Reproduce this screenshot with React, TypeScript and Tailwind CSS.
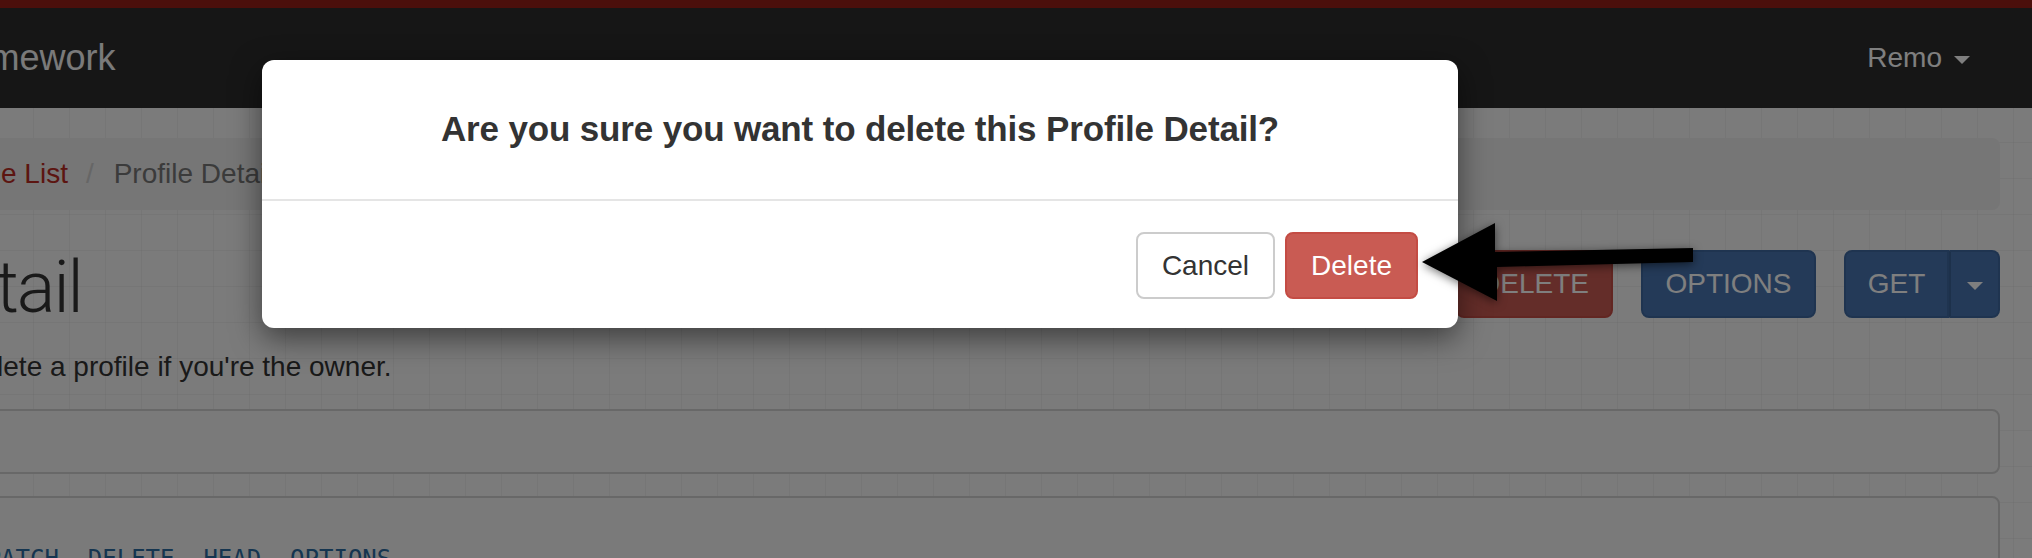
import React from "react";

function Caret({ className = "" }: { className?: string }) {
  return (
    <span
      className={`inline-block h-0 w-0 border-x-[8px] border-t-[8px] border-x-transparent border-t-white ${className}`}
    />
  );
}

export default function App() {
  return (
    <div className="relative h-[558px] w-[2032px] overflow-hidden bg-[#f6f6f6] bg-[linear-gradient(to_right,rgba(0,0,0,0.035)_1px,transparent_1px),linear-gradient(to_bottom,rgba(0,0,0,0.035)_1px,transparent_1px)] bg-[size:36px_36px] bg-[position:33px_34px] font-['Liberation_Sans',Arial,sans-serif] text-[#333]">
      {/* Navbar */}
      <header className="border-t-[8px] border-t-[#961e16] bg-[#2c2c2c]">
        <div className="flex h-[100px] items-center justify-between pr-[62px]">
          <a className="-ml-[282px] whitespace-nowrap text-[36px] text-[#f5f5f5]">Django REST framework</a>
          <div className="flex items-center text-[28px] text-white">
            Remo
            <Caret className="ml-[12px] mt-[4px]" />
          </div>
        </div>
      </header>

      {/* Page content */}
      <main className="-ml-[280px] mr-[32px] flex flex-col">
        <ol className="mt-[30px] flex h-[72px] items-center whitespace-nowrap rounded-[8px] bg-[#ececec] pl-[64px] pr-[30px] text-[28px]">
          <li className="text-[#b82a22]">Api Root</li>
          <li className="pl-[18px] pr-[20px] text-[#cccccc]">/</li>
          <li className="text-[#b82a22]">Profile List</li>
          <li className="pl-[18px] pr-[20px] text-[#cccccc]">/</li>
          <li className="text-[#777777]">Profile Detail</li>
        </ol>

        <div className="mt-[38px] flex items-start justify-between">
          <h1 className="-ml-[8px] whitespace-nowrap font-['Roboto','Liberation_Sans',sans-serif] text-[72px] font-light leading-[79px] tracking-[-2px] text-[#333]">
            Profile Detail
          </h1>
          <div className="mt-[2px] flex gap-[28px] text-[28px] text-white">
            <button className="h-[68px] w-[157px] rounded-[8px] border-2 border-[#c44c44] bg-[#c95b53]">DELETE</button>
            <button className="h-[68px] w-[175px] rounded-[8px] border-2 border-[#3f69a0] bg-[#4874b0]">OPTIONS</button>
            <div className="flex">
              <button className="h-[68px] w-[105px] rounded-l-[8px] border-2 border-[#3f69a0] bg-[#4874b0]">GET</button>
              <button className="flex h-[68px] w-[51px] items-center justify-center rounded-r-[8px] border-2 border-l-[#3a6296] border-[#3f69a0] bg-[#4874b0]">
                <Caret className="mt-[4px]" />
              </button>
            </div>
          </div>
        </div>

        <p className="mt-[20px] whitespace-nowrap text-[28px] leading-[40px]">
          Retrieve, update or delete a profile if you're the owner.
        </p>

        <pre className="mt-[22px] rounded-[8px] border-2 border-[#d0d0d0] bg-[#f5f5f5] px-[19px] pb-[15px] pt-[16px] font-['DejaVu_Sans_Mono',monospace] text-[24px] leading-[30px]">
          <b>GET</b> /profiles/1/
        </pre>
        <pre className="mt-[22px] rounded-[8px] border-2 border-[#d0d0d0] bg-[#f5f5f5] px-[19px] pb-[15px] pt-[16px] font-['DejaVu_Sans_Mono',monospace] text-[24px] leading-[30px]">
          <b>HTTP 200 OK</b>
          {"\n"}
          <b>Allow:</b> <span className="text-[#2a6aa0]">GET, PUT, PATCH, DELETE, HEAD, OPTIONS</span>
        </pre>
      </main>

      {/* Backdrop */}
      <div className="absolute inset-0 bg-black/50" />

      {/* Confirm dialog */}
      <div className="absolute left-[262px] top-[60px] w-[1196px] rounded-[12px] bg-white shadow-[0_10px_30px_rgba(0,0,0,0.5)]">
        <div className="flex h-[141px] items-center justify-center border-b-2 border-[#e5e5e5]">
          <h4 className="text-[35px] font-bold tracking-[-0.15px] text-[#333]">
            Are you sure you want to delete this Profile Detail?
          </h4>
        </div>
        <div className="flex justify-end gap-[10px] pb-[29px] pr-[40px] pt-[31px] text-[28px]">
          <button className="h-[67px] rounded-[8px] border-2 border-[#cccccc] bg-white px-[24px] text-[#333]">Cancel</button>
          <button className="h-[67px] rounded-[8px] border-2 border-[#c44c44] bg-[#c95b53] px-[24px] text-white">Delete</button>
        </div>
      </div>

      {/* Annotation arrow */}
      <svg
        className="absolute left-[1410px] top-[210px] h-[110px] w-[300px] drop-shadow-[0_2px_5px_rgba(0,0,0,0.55)]"
        viewBox="0 0 300 110"
      >
        <polygon points="12,52 85,13 85,42 283,38 283,52 87,57 87,91" fill="#000" />
      </svg>
    </div>
  );
}
